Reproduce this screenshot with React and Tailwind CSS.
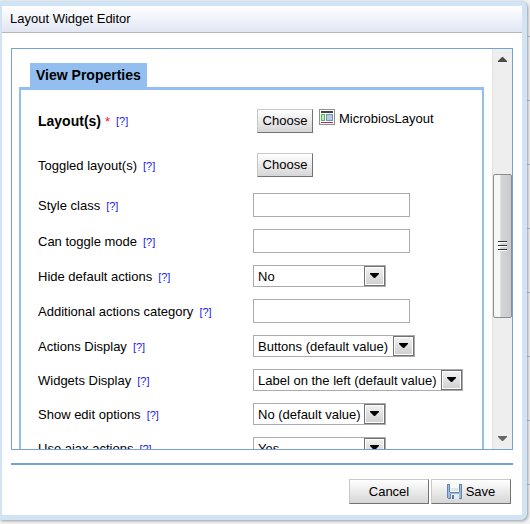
import React from "react";

function Help() {
  return (
    <a href="#help" className="ml-1.5 align-top text-[11px] text-[#1a1af0]">
      [?]
    </a>
  );
}

function Row({ id, label, pad = "py-1.5", bold = false, required = false, children }) {
  return (
    <div className={`flex items-center ${pad}`}>
      <div className="w-[215px] shrink-0 whitespace-nowrap pt-px leading-4">
        <label htmlFor={id} className={bold ? "text-[14px] font-bold" : ""}>
          {label}
        </label>
        {required && <span className="ml-1 text-[#f0142d]">*</span>}
        <Help />
      </div>
      {children}
    </div>
  );
}

function Button({ id, size, children }) {
  return (
    <button
      id={id}
      type="button"
      className={`flex items-center justify-center border border-t-[#c8c8c8] border-r-[#737373] border-b-[#737373] border-l-[#c8c8c8] bg-linear-to-b from-white to-[#d6d6d6] ${size}`}
    >
      {children}
    </button>
  );
}

function TextField({ id }) {
  return <input id={id} type="text" className="h-6 w-[157px] border border-[#aaabb0] bg-white px-1" />;
}

function Select({ id, value, options, width }) {
  return (
    <div className={`relative h-[22px] ${width}`}>
      <select
        id={id}
        defaultValue={value}
        className="h-full w-full appearance-none border border-[#aaabb0] bg-white pt-px pl-1 text-[13px]"
      >
        {options.map((o) => (
          <option key={o}>{o}</option>
        ))}
      </select>
      <span className="pointer-events-none absolute top-px right-px bottom-px flex w-[21px] items-center justify-center border border-[#717171] bg-linear-to-b from-[#f2f2f2] to-[#cfcfcf] pb-0.5 shadow-[inset_0_0_0_1px_white]">
        <svg width="9" height="5" viewBox="0 0 9 5" aria-hidden="true">
          <path d="M0 0h9v1L5 5H4L0 1z" />
        </svg>
      </span>
    </div>
  );
}

function LayoutIcon() {
  return (
    <svg width="16" height="16" viewBox="0 0 16 16" shapeRendering="crispEdges" aria-hidden="true">
      <rect x=".5" y=".5" width="15" height="15" fill="#fff" stroke="#909094" />
      <path fill="#464047" d="M2 2h12v2H2z" />
      <path fill="#c5e8c4" stroke="#4fbd50" d="M2.5 5.5h3v6h-3z" />
      <path fill="#b9c9e2" stroke="#7291c7" d="M7.5 5.5h6v6h-6z" />
      <path fill="#b52b69" d="M2 13h12v1H2z" />
    </svg>
  );
}

function SaveIcon() {
  return (
    <svg width="15" height="15" viewBox="0 0 15 15" shapeRendering="crispEdges" aria-hidden="true">
      <path d="M.5.5h14v14h-13l-1-1z" fill="#9db9dc" stroke="#6685ad" />
      <path fill="#f6fafb" d="M3 0h9v8H3z" />
      <path fill="#dce7e6" d="M4 4h7v3H4z" />
      <path fill="#6285b5" d="M2 1h1v7H2zM12 1h1v7h-1zM3 8h9v1H3z" />
      <path fill="#e5ebf0" d="M4 10h8v5H4z" />
      <path fill="#56779f" d="M5 11h2v4H5z" />
      <path fill="#7c8895" d="M3 10h1v4H3z" />
    </svg>
  );
}

function ScrollBar() {
  return (
    <div className="flex w-5 shrink-0 flex-col items-center border-l border-[#e3e3e3] bg-[#eeeeee] py-2">
      <svg width="9" height="5" viewBox="0 0 9 5" aria-hidden="true">
        <path d="M4 0h1l4 4v1H0V4z" fill="#4b4b4b" />
      </svg>
      <div className="min-h-0 flex-[112]" />
      <div className="flex min-h-0 w-[19px] flex-[143] flex-col items-center justify-center gap-0.5 rounded-xs border border-[#8d8d90] bg-linear-to-r from-[#f6f6f7] from-35% via-[#d5d6d9] via-40% to-[#c8c9ce]">
        <span className="h-0.5 w-[9px] border-t border-[#333] bg-white" />
        <span className="h-0.5 w-[9px] border-t border-[#333] bg-white" />
        <span className="h-0.5 w-[9px] border-t border-[#333] bg-white" />
      </div>
      <div className="min-h-0 flex-[118]" />
      <svg width="9" height="5" viewBox="0 0 9 5" aria-hidden="true">
        <path d="M0 0h9v1L5 5H4L0 1z" fill="#666" />
      </svg>
    </div>
  );
}

export default function App() {
  return (
    <div className="h-screen overflow-hidden bg-[#f1f2f4] bg-[repeating-linear-gradient(to_bottom,transparent_0,transparent_36px,#9db8d2_36px,#9db8d2_37px,transparent_37px,transparent_64px)] pt-px pr-[3px] pb-1 font-['Liberation_Sans',Arial,sans-serif] text-[13px] text-black">
      <main className="flex h-full flex-col rounded-r-md border-[5px] border-l-2 border-[#d0e4f5] bg-white shadow-[1px_1px_3px_0px_#999]">
        <header className="flex h-[27px] shrink-0 items-center border-b border-[#b7b7b7] bg-linear-to-b from-white to-[#e1e6f3] px-2">
          <h1>Layout Widget Editor</h1>
        </header>

        <div className="mx-[9px] mt-[15px] flex min-h-0 flex-1 border border-[#74a2d6]">
          <form className="min-w-0 flex-1 overflow-hidden pt-3.5 pr-2 pl-[7px]">
            <h2 className="ml-[11px] flex h-6 w-fit items-center bg-[#92bfef] px-1.5 text-[14px] font-bold">
              View Properties
            </h2>
            <div className="border-2 border-t-[3px] border-[#92bfef] py-[9px] pl-[17px]">
              <Row id="layouts" label="Layout(s)" pad="py-2.5" bold required>
                <div className="flex items-start gap-1.5 pl-1">
                  <Button id="layouts" size="h-6 w-14">Choose</Button>
                  <LayoutIcon />
                  <span className="-ml-0.5 leading-5">MicrobiosLayout</span>
                </div>
              </Row>
              <Row id="toggled" label="Toggled layout(s)" pad="py-2.5">
                <div className="pl-1">
                  <Button id="toggled" size="h-6 w-14">Choose</Button>
                </div>
              </Row>
              <Row id="style" label="Style class">
                <TextField id="style" />
              </Row>
              <Row id="mode" label="Can toggle mode">
                <TextField id="mode" />
              </Row>
              <Row id="hide" label="Hide default actions">
                <Select id="hide" value="No" options={["No (default value)", "No", "Yes"]} width="w-[133px]" />
              </Row>
              <Row id="category" label="Additional actions category">
                <TextField id="category" />
              </Row>
              <Row id="actions" label="Actions Display">
                <Select id="actions" value="Buttons (default value)" options={["Buttons (default value)"]} width="w-[162px]" />
              </Row>
              <Row id="widgets" label="Widgets Display">
                <Select
                  id="widgets"
                  value="Label on the left (default value)"
                  options={["Label on the left (default value)"]}
                  width="w-[210px]"
                />
              </Row>
              <Row id="edit" label="Show edit options">
                <Select id="edit" value="No (default value)" options={["No (default value)", "Yes"]} width="w-[133px]" />
              </Row>
              <Row id="ajax" label="Use ajax actions">
                <Select id="ajax" value="Yes" options={["No (default value)", "No", "Yes"]} width="w-[133px]" />
              </Row>
            </div>
          </form>
          <ScrollBar />
        </div>

        <footer className="mx-[9px] mt-[13px] flex shrink-0 justify-end gap-0.5 border-t-2 border-[#74a2d6] pt-3.5 pr-0.5 pb-[11px]">
          <Button id="cancel" size="h-[25px] w-20">Cancel</Button>
          <Button id="save" size="h-[25px] w-20 gap-1">
            <SaveIcon />
            Save
          </Button>
        </footer>
      </main>
    </div>
  );
}
